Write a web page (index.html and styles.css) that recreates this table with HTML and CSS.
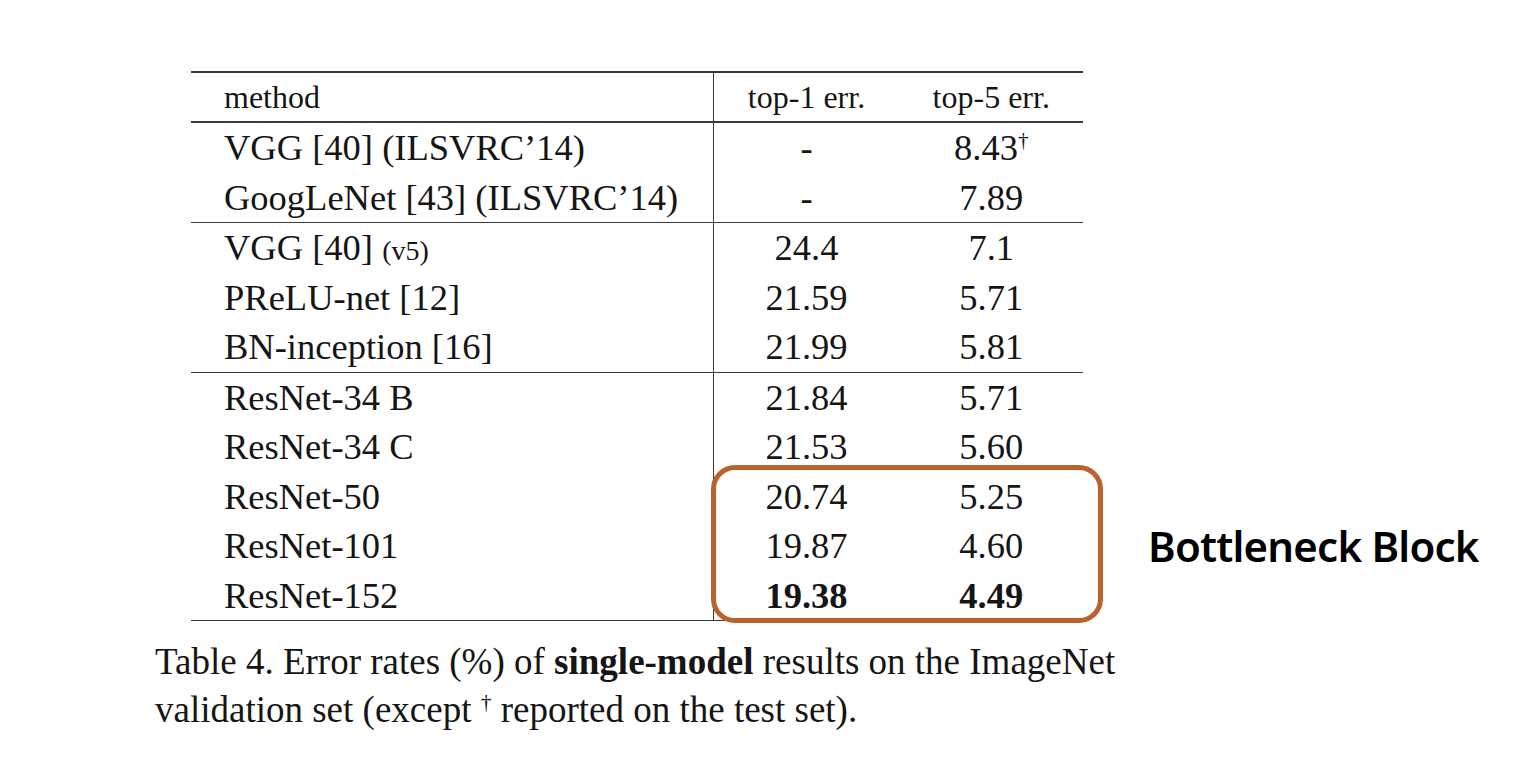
FILE: index.html
```html
<!DOCTYPE html>
<html lang="en">
<head>
  <meta charset="UTF-8">
  <meta name="viewport" content="width=device-width, initial-scale=1.0">
  <title>Table 4 - Error rates</title>
  <link rel="stylesheet" href="styles.css">
</head>
<body>
  <div class="figure">
    <div class="table-block">
      <div class="table-wrap">
        <table class="results">
          <thead>
            <tr>
              <th class="method">method</th>
              <th class="num">top-1 err.</th>
              <th class="num">top-5 err.</th>
            </tr>
          </thead>
          <tbody>
            <tr>
              <td class="method">VGG [40] (ILSVRC’14)</td>
              <td class="num">-</td>
              <td class="num">8.43<sup class="dagger">†</sup></td>
            </tr>
            <tr>
              <td class="method">GoogLeNet [43] (ILSVRC’14)</td>
              <td class="num">-</td>
              <td class="num">7.89</td>
            </tr>
          </tbody>
          <tbody>
            <tr>
              <td class="method">VGG [40] <span class="small">(v5)</span></td>
              <td class="num">24.4</td>
              <td class="num">7.1</td>
            </tr>
            <tr>
              <td class="method">PReLU-net [12]</td>
              <td class="num">21.59</td>
              <td class="num">5.71</td>
            </tr>
            <tr>
              <td class="method">BN-inception [16]</td>
              <td class="num">21.99</td>
              <td class="num">5.81</td>
            </tr>
          </tbody>
          <tbody>
            <tr>
              <td class="method">ResNet-34 B</td>
              <td class="num">21.84</td>
              <td class="num">5.71</td>
            </tr>
            <tr>
              <td class="method">ResNet-34 C</td>
              <td class="num">21.53</td>
              <td class="num">5.60</td>
            </tr>
            <tr>
              <td class="method">ResNet-50</td>
              <td class="num">20.74</td>
              <td class="num">5.25</td>
            </tr>
            <tr>
              <td class="method">ResNet-101</td>
              <td class="num">19.87</td>
              <td class="num">4.60</td>
            </tr>
            <tr>
              <td class="method">ResNet-152</td>
              <td class="num"><b>19.38</b></td>
              <td class="num"><b>4.49</b></td>
            </tr>
          </tbody>
        </table>
        <!-- highlight around the bottleneck rows -->
        <div class="highlight"></div>
      </div>

      <p class="caption">Table 4. Error rates (%) of <b>single-model</b> results on the ImageNet<br>validation set (except <sup class="dagger">†</sup> reported on the test set).</p>
    </div>

    <div class="label">Bottleneck Block</div>
  </div>
</body>
</html>
```

FILE: styles.css
```css
body {
  margin: 0;
  background: #ffffff;
  color: #151515;
  font-family: "Liberation Serif", "Times New Roman", serif;
}

.figure {
  display: flex;
  align-items: flex-start;
  padding: 71px 0 0 155px;
}

.table-block {
  width: 1000px;
}

.table-wrap {
  position: relative;
  margin-left: 36px;
  width: 892px;
}

.results {
  width: 892px;
  border-collapse: collapse;
  border-top: 2px solid #3a3a3a;
  border-bottom: 1.5px solid #3a3a3a;
  table-layout: fixed;
}

.results th,
.results td {
  padding: 0;
  white-space: nowrap;
  font-weight: normal;
}

.results th {
  height: 48px;
  font-size: 32px;
  border-bottom: 2px solid #3a3a3a;
}

.results td {
  height: 49.5px;
  font-size: 36.5px;
}

.results tbody + tbody tr:first-child td {
  border-top: 1.5px solid #3a3a3a;
}

.results .method {
  width: 522px;
  text-align: left;
  padding-left: 33px;
  box-sizing: border-box;
}

.results .num {
  text-align: center;
}

.results th:nth-child(2),
.results td:nth-child(2) {
  width: 186px;
  border-left: 1.5px solid #3a3a3a;
}

.results b {
  font-weight: bold;
}

.small {
  font-size: 28px;
}

.dagger {
  font-size: 58%;
  vertical-align: 0.6em;
  line-height: 0;
}

.highlight {
  position: absolute;
  left: 520px;
  top: 394px;
  width: 392px;
  height: 158px;
  box-sizing: border-box;
  border: 5px solid #bb612b;
  border-radius: 24px;
}

.caption {
  margin: 17px 0 0 0;
  font-size: 37px;
  line-height: 48px;
  white-space: nowrap;
}

.label {
  margin: 446px 0 0 -7px;
  font-family: "Noto Sans", "Open Sans", sans-serif;
  font-weight: 600;
  font-size: 42px;
  letter-spacing: -0.8px;
  color: #000000;
}
```
